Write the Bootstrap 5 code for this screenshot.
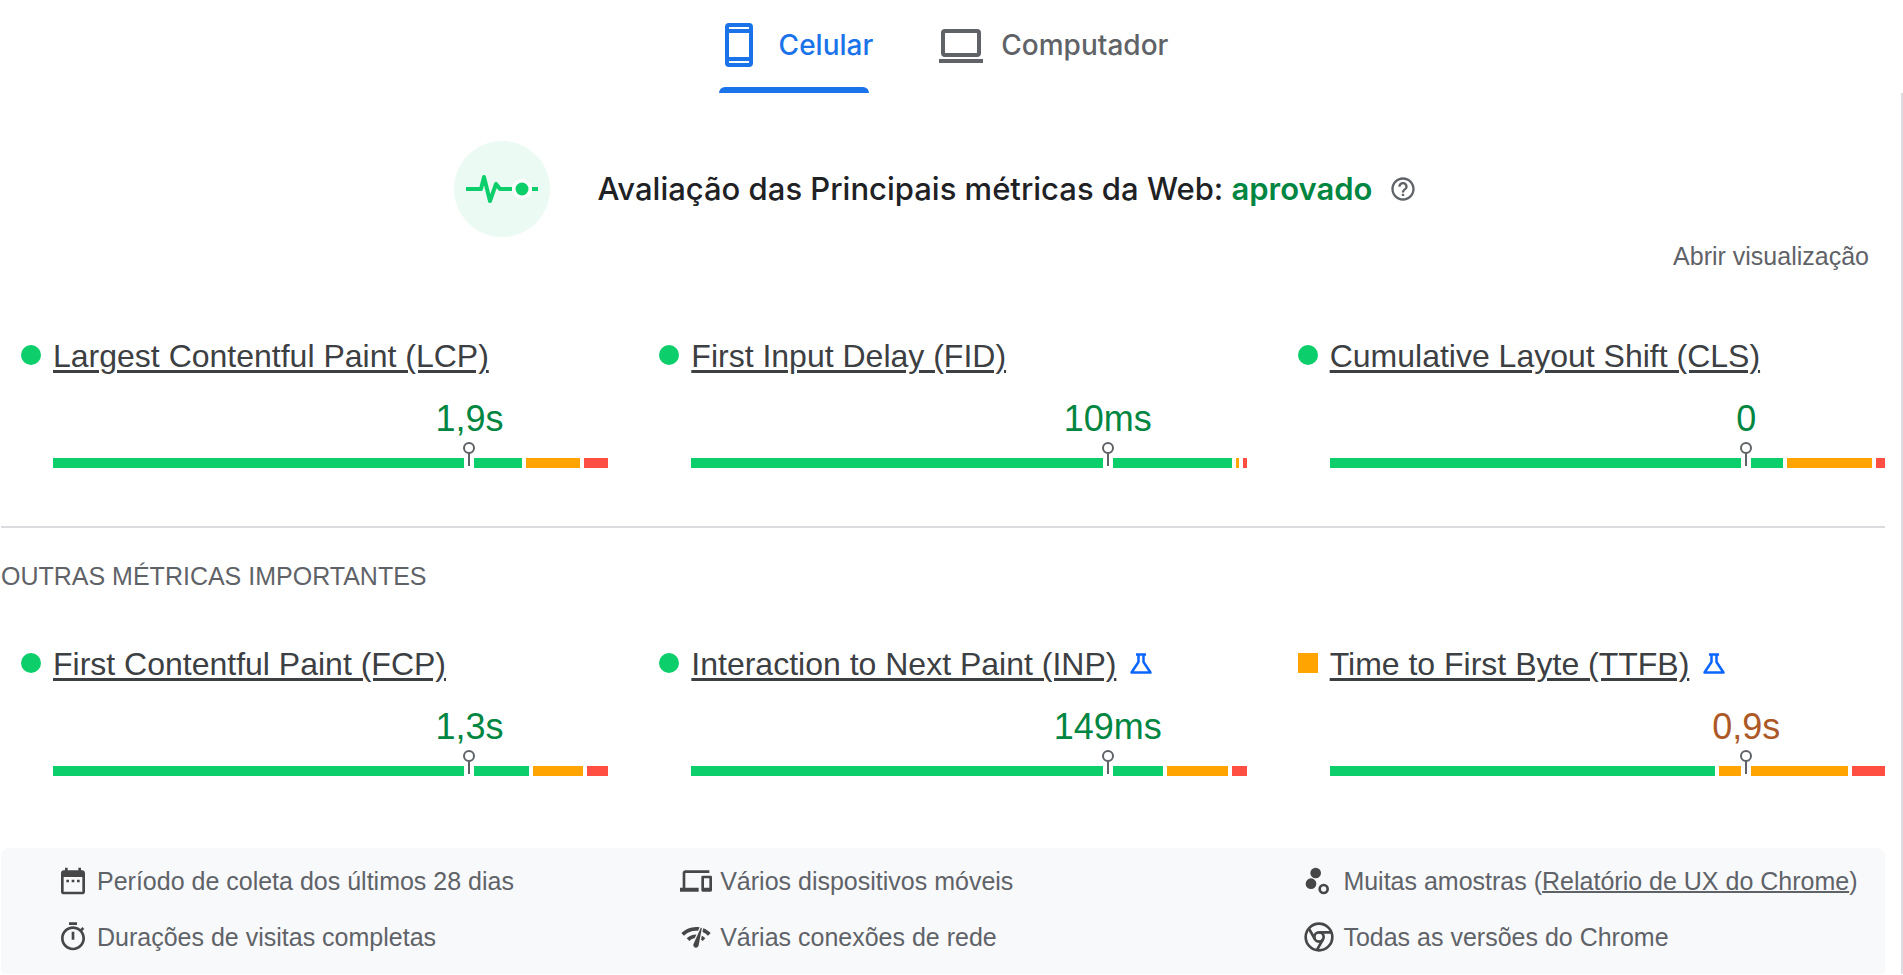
<!DOCTYPE html>
<html lang="pt-BR">
<head>
<meta charset="utf-8">
<meta name="viewport" content="width=device-width, initial-scale=1">
<title>Principais métricas da Web</title>
<link href="https://cdn.jsdelivr.net/npm/bootstrap@5.3.0/dist/css/bootstrap.min.css" rel="stylesheet">
<style>
:root{--good:#0cce6b;--avg:#ffa400;--poor:#ff4e42;--good-text:#018642;--avg-text:#ad5927;--muted:#5f6368;--line:#dadce0}
body{font-family:"Liberation Sans",Arial,sans-serif;font-size:25px;line-height:32px;color:var(--muted);background:#fff}
svg{flex:none}
.tabs-bar{gap:64px;margin-right:20px}
.device-tab{display:flex;align-items:center;gap:16px;height:93px;padding:0 0 3px;border:0;background:none;color:var(--muted);font:500 28px/40px Inter,sans-serif;position:relative}
.device-tab.active{color:#1a73e8}
.device-tab.active::after{content:"";position:absolute;left:4px;right:4px;bottom:0;height:6px;border-radius:6px 6px 0 0;background:currentColor}
.report{border-right:2px solid var(--line);padding:48px 16px 0 1px}
.verdict{gap:48px;padding-right:16px}
.verdict h1{font:500 31px/40px Inter,sans-serif;color:#202124}
.verdict strong{font-weight:600;color:var(--good-text)}
.help-btn,.expand-btn{border:0;background:none;padding:0;color:inherit}
.help-btn{margin-left:-32px;line-height:0}
.expand-btn{line-height:38px;margin-right:16px}
.metric-grid{display:grid;grid-template-columns:repeat(3,1fr);gap:51px;padding-left:20px}
.vitals{margin-top:61px}
.metric-name{display:grid;grid-template-columns:32px auto 1fr;align-items:center;font-size:32px;line-height:40px;font-weight:400;margin:0}
.metric-name a{color:#3c4043;text-decoration-thickness:3px;text-underline-offset:3px}
.metric-name svg{margin-left:13px}
.status{width:20px;height:20px;border-radius:50%;background:var(--good);margin-bottom:2px}
.status.average{border-radius:0;background:var(--avg)}
.metric-body{margin-left:32px}
.metric-value{margin:23px 0 19px;padding-left:50%;font-size:36px;line-height:40px;text-align:center;color:var(--good-text)}
.metric-value.average{color:var(--avg-text)}
.dist{height:10px;gap:4px;position:relative}
.dist i{flex-basis:0}
.g{background:var(--good)}.a{background:var(--avg)}.p{background:var(--poor)}
.pin{position:absolute;left:75%;top:-16px;width:10px;height:26px;margin-left:-5px;display:flex;justify-content:center;background:linear-gradient(#fff,#fff) bottom/10px 10px no-repeat}
.section-rule{border:0;border-top:2px solid var(--line);opacity:1;margin:58px 0 28px}
.section-title{font-size:25px;line-height:40px;font-weight:400;margin:0 0 48px}
.facts{display:grid;grid-template-columns:19fr 19fr 17fr;row-gap:24px;padding:17px 24px 21px 56px;margin-top:72px;background:#f8f9fb;border-radius:8px 8px 4px 4px;list-style:none}
.facts li{display:flex;align-items:center;gap:8px;white-space:nowrap}
.facts svg{fill:#474747}
.facts a{color:inherit;text-decoration-thickness:2px}
</style>
</head>
<body>
<header>
<div class="tabs-bar d-flex justify-content-center" role="tablist">
<button class="device-tab active" role="tab" aria-selected="true"><svg width="48" height="48" viewBox="0 0 48 48" fill="none" stroke="currentColor" stroke-width="4"><rect x="12" y="4" width="24" height="40" rx="2"/><path d="M12 10h24M12 38h24"/></svg>Celular</button>
<button class="device-tab" role="tab" aria-selected="false"><svg width="48" height="48" viewBox="0 0 48 48" fill="none" stroke="currentColor" stroke-width="4"><rect x="6" y="10" width="36" height="24" rx="2"/><path d="M2 40h44"/></svg>Computador</button>
</div>
</header>
<main class="report">
<section class="verdict d-flex justify-content-center align-items-center">
<svg width="96" height="96" viewBox="0 0 96 96"><circle cx="48" cy="48" r="48" fill="#ebfaf3"/><path d="M12 48h15l3-12 6 24 6-17 4 5h12M78 48h6" fill="none" stroke="#0cce6b" stroke-width="4" stroke-linejoin="round"/><circle cx="68" cy="48" r="10" fill="#fff"/><circle cx="68" cy="48" r="6.5" fill="#0cce6b"/></svg>
<h1 class="m-0">Avaliação das Principais métricas da Web: <strong>aprovado</strong></h1>
<button class="help-btn" aria-label="Ajuda"><svg width="28" height="28" viewBox="0 0 24 24" fill="currentColor"><path d="M11 18h2v-2h-2v2zm1-16C6.480 2 2 6.480 2 12s4.480 10 10 10 10-4.480 10-10S17.520 2 12 2zm0 18c-4.410 0-8-3.590-8-8s3.590-8 8-8 8 3.590 8 8-3.590 8-8 8zm0-14c-2.210 0-4 1.790-4 4h2c0-1.100.9-2 2-2s2 .9 2 2c0 2-3 1.750-3 5h2c0-2.250 3-2.500 3-5 0-2.210-1.790-4-4-4z"/></svg></button>
</section>
<div class="d-flex justify-content-end"><button class="expand-btn">Abrir visualização</button></div>

<section class="metric-grid vitals">
<article><h2 class="metric-name"><span class="status"></span><a href="#lcp">Largest Contentful Paint (LCP)</a></h2><div class="metric-body"><div class="metric-value">1,9s</div>
<div class="dist d-flex"><i class="g" style="flex-grow:469"></i><i class="a" style="flex-grow:54"></i><i class="p" style="flex-grow:24"></i><span class="pin"><svg width="12" height="24" viewBox="0 0 12 24"><use href="#pin"/></svg></span></div></div></article>
<article><h2 class="metric-name"><span class="status"></span><a href="#fid">First Input Delay (FID)</a></h2><div class="metric-body"><div class="metric-value">10ms</div>
<div class="dist d-flex"><i class="g" style="flex-grow:539"></i><i class="a" style="flex-grow:3"></i><i class="p" style="flex-grow:4"></i><span class="pin"><svg width="12" height="24" viewBox="0 0 12 24"><use href="#pin"/></svg></span></div></div></article>
<article><h2 class="metric-name"><span class="status"></span><a href="#cls">Cumulative Layout Shift (CLS)</a></h2><div class="metric-body"><div class="metric-value">0</div>
<div class="dist d-flex"><i class="g" style="flex-grow:453"></i><i class="a" style="flex-grow:85"></i><i class="p" style="flex-grow:9"></i><span class="pin"><svg width="12" height="24" viewBox="0 0 12 24"><use href="#pin"/></svg></span></div></div></article>
</section>

<hr class="section-rule">
<h2 class="section-title">OUTRAS MÉTRICAS IMPORTANTES</h2>

<section class="metric-grid">
<article><h3 class="metric-name"><span class="status"></span><a href="#fcp">First Contentful Paint (FCP)</a></h3><div class="metric-body"><div class="metric-value">1,3s</div>
<div class="dist d-flex"><i class="g" style="flex-grow:476"></i><i class="a" style="flex-grow:50"></i><i class="p" style="flex-grow:21"></i><span class="pin"><svg width="12" height="24" viewBox="0 0 12 24"><use href="#pin"/></svg></span></div></div></article>
<article><h3 class="metric-name"><span class="status"></span><a href="#inp">Interaction to Next Paint (INP)</a><svg width="24" height="24" viewBox="0 0 24 24"><use href="#flask"/></svg></h3><div class="metric-body"><div class="metric-value">149ms</div>
<div class="dist d-flex"><i class="g" style="flex-grow:471"></i><i class="a" style="flex-grow:60"></i><i class="p" style="flex-grow:15"></i><span class="pin"><svg width="12" height="24" viewBox="0 0 12 24"><use href="#pin"/></svg></span></div></div></article>
<article><h3 class="metric-name"><span class="status average"></span><a href="#ttfb">Time to First Byte (TTFB)</a><svg width="24" height="24" viewBox="0 0 24 24"><use href="#flask"/></svg></h3><div class="metric-body"><div class="metric-value average">0,9s</div>
<div class="dist d-flex"><i class="g" style="flex-grow:385"></i><i class="a" style="flex-grow:129"></i><i class="p" style="flex-grow:33"></i><span class="pin"><svg width="12" height="24" viewBox="0 0 12 24"><use href="#pin"/></svg></span></div></div></article>
</section>

<ul class="facts mb-0">
<li><svg width="32" height="32" viewBox="0 0 24 24"><path d="M19 4h-1V2h-2v2H8V2H6v2H5c-1.110 0-2 .9-2 2v14c0 1.100.89 2 2 2h14c1.100 0 2-.9 2-2V6c0-1.100-.9-2-2-2zm0 16H5V9h14v11zM7 11h2v2H7zm4 0h2v2h-2zm4 0h2v2h-2z"/></svg>Período de coleta dos últimos 28 dias</li>
<li><svg width="32" height="32" viewBox="0 0 24 24"><path d="M4 6h18V4H4c-1.100 0-2 .9-2 2v11H0v3h14v-3H4V6zm19 2h-6c-.55 0-1 .45-1 1v10c0 .55.45 1 1 1h6c.55 0 1-.45 1-1V9c0-.55-.45-1-1-1zm-1 9h-4v-7h4v7z"/></svg>Vários dispositivos móveis</li>
<li><svg width="32" height="32" viewBox="0 0 24 24"><circle cx="6" cy="14" r="4"/><circle cx="9.500" cy="6" r="4"/><circle cx="15.500" cy="18" r="3" fill="none" stroke="#474747" stroke-width="2"/></svg><span>Muitas amostras (<a href="#crux">Relatório de UX do Chrome</a>)</span></li>
<li><svg width="32" height="32" viewBox="0 0 24 24"><path d="M15 1H9v2h6V1zm-4 13h2V8h-2v6zm8.030-6.610 1.420-1.420c-.43-.51-.9-.99-1.410-1.410l-1.420 1.420C16.070 4.740 14.120 4 12 4c-4.970 0-9 4.030-9 9s4.020 9 9 9 9-4.030 9-9c0-2.120-.74-4.070-1.970-5.610zM12 20c-3.870 0-7-3.130-7-7s3.130-7 7-7 7 3.130 7 7-3.130 7-7 7z"/></svg>Durações de visitas completas</li>
<li><svg width="32" height="32" viewBox="0 0 24 24"><path d="M15.900 5c-.17 0-.32.090-.41.230l-.070.150-5.180 11.650c-.16.290-.26.610-.26.960 0 1.110.9 2.010 2.010 2.010.96 0 1.770-.68 1.960-1.590l.010-.030L16.400 5.500c0-.28-.22-.5-.5-.5zM1 9l2 2c2.880-2.880 6.790-4.080 10.530-3.620l1.190-2.680C9.890 3.840 4.740 5.270 1 9zm20 2 2-2c-1.640-1.640-3.550-2.820-5.590-3.570l-.53 2.820c1.500.62 2.900 1.530 4.120 2.750zm-4 4 2-2c-.8-.8-1.700-1.420-2.660-1.890l-.55 2.920c.42.270.83.590 1.210.97zM5 13l2 2c1.130-1.130 2.560-1.790 4.030-2l1.280-2.880c-2.630-.08-5.300.870-7.310 2.880z"/></svg>Várias conexões de rede</li>
<li><svg width="32" height="32" viewBox="0 0 24 24"><g fill="none" stroke="#474747" stroke-width="2"><circle cx="12" cy="12" r="10"/><circle cx="12" cy="12" r="3.500"/><path d="M12 8.500h9M4.600 6l4.400 7.700M15 13.700 10.600 21.500"/></g></svg>Todas as versões do Chrome</li>
</ul>
</main>
<svg width="0" height="0" class="position-absolute" aria-hidden="true"><defs>
<g id="pin" fill="none" stroke="#5f6368" stroke-width="2"><circle cx="6" cy="6" r="5" fill="#fff"/><path d="M6 11v13"/></g>
<g id="flask" fill="none" stroke="#0b66ff" stroke-width="2.500"><path d="M7 2.500h10M9.500 3v7L2.500 20.500h19L14.500 10V3" stroke-linejoin="round"/></g>
</defs></svg>
<script src="https://cdn.jsdelivr.net/npm/bootstrap@5.3.0/dist/js/bootstrap.bundle.min.js"></script>
</body>
</html>
